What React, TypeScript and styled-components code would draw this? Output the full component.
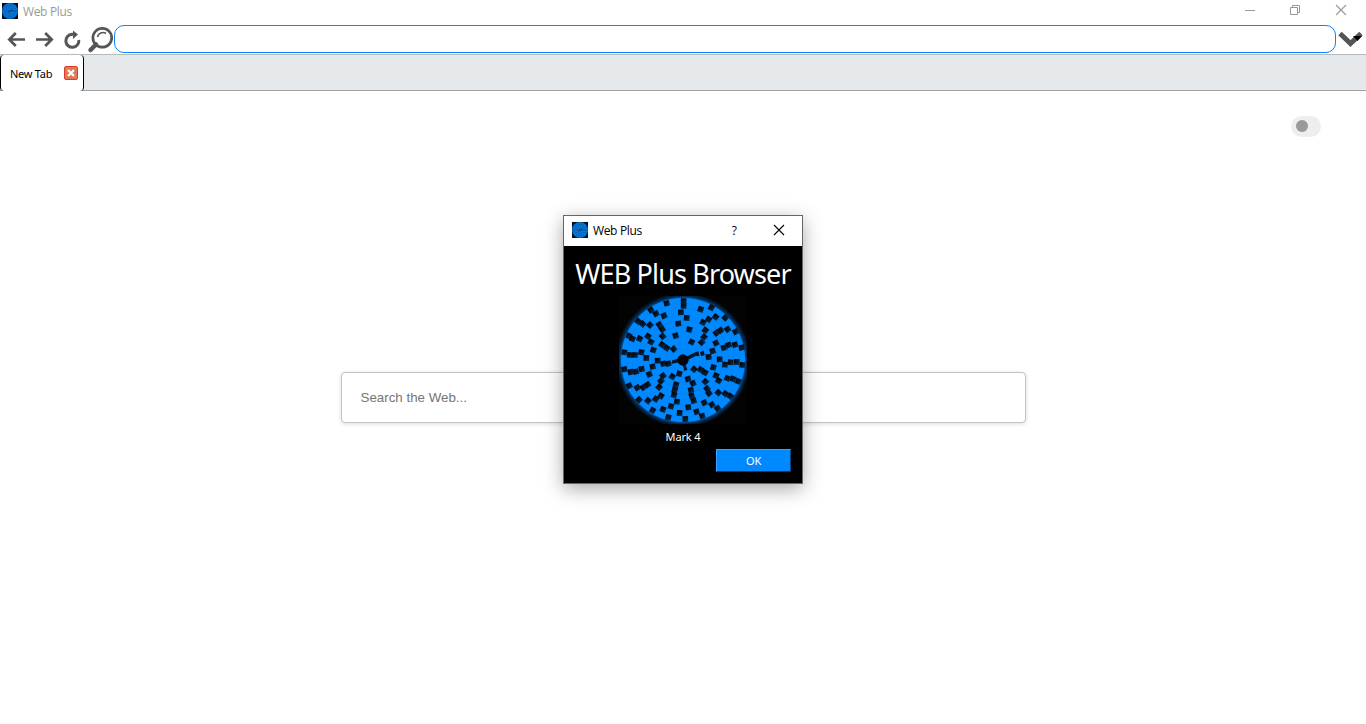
import React from "react";
import styled, { createGlobalStyle } from "styled-components";

const Global = createGlobalStyle`
  *{box-sizing:border-box}
  html,body{margin:0;height:100%;overflow:hidden;background:#fff}
  body{font:11px "Noto Sans","Open Sans",sans-serif;color:#000}
  button,input{font:inherit;margin:0}
`;

const Window = styled.div`
  position: relative;
  height: 724px;
  display: flex;
  flex-direction: column;
`;
const TitleBar = styled.header`
  height: 24px;
  display: flex;
  align-items: flex-start;
  padding: 3px 19px 0 2px;
`;
const Title = styled.span<{ $dark?: boolean }>`
  margin: 1px auto 0 5px;
  font-family: "Open Sans", sans-serif;
  font-size: 12px;
  line-height: 16px;
  letter-spacing: -0.35px;
  color: ${(p) => (p.$dark ? "#000" : "#999")};
`;
const WindowButtons = styled.div`
  display: flex;
  gap: 34px;
  height: 12px;
  margin-top: 1px;
`;
const ToolBar = styled.nav`
  height: 30px;
  display: flex;
  align-items: center;
  svg { display: block; flex: none; }
`;
const Address = styled.input`
  flex: 1;
  min-width: 0;
  height: 28px;
  border: 1px solid #0a84ff;
  border-radius: 10px;
  background: #fff;
  outline: 0;
`;
const TabStrip = styled.div`
  height: 37px;
  background: #e5e9ec;
  border-top: 1px solid #b9b9b9;
  border-bottom: 1px solid #a0a0a0;
  display: flex;
`;
const Tab = styled.div`
  width: 84px;
  height: 36px;
  background: #fff;
  border: solid #000;
  border-width: 0 1px;
  border-radius: 4px;
  display: flex;
  align-items: center;
  justify-content: space-between;
  padding: 0 5px 0 9px;
  font-size: 11px;
  letter-spacing: -0.25px;
`;
const TabClose = styled.span`
  width: 14px;
  height: 14px;
  border: 1px solid #d6402b;
  border-radius: 2px;
  background: #e07a55;
  display: flex;
`;
const Page = styled.main`
  flex: 1;
  display: flex;
  flex-direction: column;
  align-items: center;
`;
const Toggle = styled.div`
  align-self: flex-end;
  margin: 25px 45px 0 0;
  width: 30px;
  height: 21px;
  border-radius: 11px;
  background: #eee;
  padding: 4px 5px;
`;
const Knob = styled.div`
  width: 12px;
  height: 12px;
  border-radius: 50%;
  background: #999;
`;
const Search = styled.input`
  margin-top: 235px;
  margin-left: 1px;
  width: 685px;
  height: 51px;
  border: 1px solid #c3c3c3;
  border-radius: 4px;
  padding: 0 18px 0 18.5px;
  font: 13.33px "Liberation Sans", Arial, sans-serif;
  box-shadow: 0 1px 4px rgba(0, 0, 0, 0.14);
  outline: 0;
  &::placeholder { color: #757575; opacity: 1; }
`;
const Dialog = styled.section`
  position: absolute;
  left: 563px;
  top: 215px;
  width: 240px;
  height: 269px;
  border: 1px solid #666;
  background: #000;
  color: #fff;
  display: flex;
  flex-direction: column;
  box-shadow: 0 5px 18px rgba(0, 0, 0, 0.34);
`;
const DialogBar = styled.header`
  height: 30px;
  background: #fff;
  display: flex;
  align-items: center;
  padding: 0 17px 2px 8px;
`;
const Help = styled.span`
  color: #000;
  font: 500 12px/16px "Open Sans", sans-serif;
  margin: 1px 36px 0 0;
`;
const DialogBody = styled.div`
  flex: 1;
  display: flex;
  flex-direction: column;
  align-items: center;
  padding: 10px 11px 11px;
`;
const Heading = styled.h1`
  margin: 0 0 4px;
  font: 400 27px/36px "Noto Sans", sans-serif;
  letter-spacing: -0.85px;
  white-space: nowrap;
`;
const Version = styled.div`
  margin-top: 5px;
  line-height: 16px;
  letter-spacing: -0.15px;
`;
const OkButton = styled.button`
  align-self: flex-end;
  margin-top: 4px;
  width: 75px;
  height: 23px;
  padding: 0;
  background: #0088ff;
  color: #fff;
  letter-spacing: -0.3px;
  border: 1px solid;
  border-color: #3ba3ff #00448a #003a75 #3ba3ff;
`;

const tiles: [number, number][] = [
  [162,40],[213,33],[213,48],[264,58],[296,53],[205,67],[222,84],[197,101],[230,119],[189,137],[237,156],
  [115,60],[130,71],[154,77],[76,94],[90,102],[112,105],[140,104],[149,118],[150,139],[49,138],[59,146],[81,146],[106,139],[115,156],
  [148,164],[162,174],[183,177],[122,180],[35,187],[52,195],[67,195],[86,187],[101,204],[135,212],[152,221],[167,221],[120,230],
  [35,238],[54,246],[70,245],[87,237],[110,253],[151,257],[145,273],[179,260],[200,251],[50,287],[74,293],[92,292],[105,284],[139,292],[145,318],
  [190,284],[186,300],[184,315],[79,329],[106,332],[129,327],[193,335],[175,349],[151,358],[120,361],[201,369],[167,382],[218,387],
  [227,352],[243,332],[237,317],[235,300],[241,280],[226,267],[252,365],[269,378],[275,338],[298,344],[315,355],
  [289,310],[283,296],[278,275],[317,308],[338,311],[353,319],[310,257],[318,272],[344,265],[361,267],[377,274],
  [244,238],[264,239],[277,248],[302,232],[288,201],[300,183],[321,208],[337,224],[354,217],[372,216],[389,225],
  [387,173],[367,164],[348,165],[334,173],[310,159],[267,157],[274,141],[278,121],[311,129],[324,121],[345,118],[369,125],[338,83],[309,81],[288,88],[271,97],
];

function Wheel({ size }: { size: number }) {
  return (
    <svg width={size} height={size} viewBox="19 18 384 384" style={{ display: "block", flex: "none" }}>
      <defs>
        <radialGradient id="halo">
          <stop offset=".91" stopColor="#0070d4" />
          <stop offset=".94" stopColor="#00305f" />
          <stop offset="1" stopColor="#030303" />
        </radialGradient>
        <linearGradient id="tile" x1="0" y1="0" x2="1" y2="1">
          <stop stopColor="#000" />
          <stop offset=".4" stopColor="#03101c" />
          <stop offset="1" stopColor="#0b3157" />
        </linearGradient>
      </defs>
      <rect x="19" y="18" width="384" height="384" fill="#030303" />
      <circle cx="211" cy="210" r="202" fill="url(#halo)" />
      <circle cx="211" cy="210" r="186" fill="#08f" />
      <g fill="none" stroke="#0078e6" strokeWidth="1">
        {[34, 51, 68, 85, 102, 119, 136, 153, 170].map((r) => <circle key={r} cx="211" cy="210" r={r} />)}
      </g>
      {tiles.map(([x, y]) => {
        const a = (Math.atan2(y - 210, x - 211) * 180) / Math.PI;
        const turn = a - Math.round(a / 90) * 90;
        return <rect key={x + "-" + y} x={x - 8.5} y={y - 8.5} width="17" height="17" fill="url(#tile)" transform={`rotate(${turn} ${x} ${y})`} />;
      })}
      <path d="M211 205L230 196L249 186L255 195L244 200L217 214ZM249 187L257 184L260 197L252 199ZM262 186L273 182L276 195L265 199ZM210 203L179 211L176 221L194 218L215 214ZM209 220L215 243L224 239L216 216Z" fill="#031525" />
      <circle cx="211" cy="210" r="17" fill="#02060a" />
    </svg>
  );
}

function AppIcon() {
  return (
    <svg width="16" height="16" viewBox="0 0 16 16" style={{ display: "block", flex: "none" }}>
      <rect width="16" height="16" fill="#001020" />
      <circle cx="8" cy="8" r="8" fill="#0878db" />
      <g fill="none" stroke="#04427c" strokeWidth=".9">
        <circle cx="8" cy="8" r="2.2" strokeDasharray="1 1.2" />
        <circle cx="8" cy="8" r="4" strokeDasharray="1 1.3" />
        <circle cx="8" cy="8" r="5.8" strokeDasharray="1.1 1.2" />
        <circle cx="8" cy="8" r="7.5" strokeDasharray="1 1.5" />
      </g>
      <path d="M6 8.500l2-.5 2.500-1" stroke="#033560" fill="none" />
    </svg>
  );
}

const Cross = ({ color }: { color: string }) => (
  <svg width="12" height="12" viewBox="0 0 12 12"><path d="M1 1L11 11M11 1L1 11" stroke={color} strokeWidth="1.1" /></svg>
);

export default function App() {
  return (
    <Window>
      <Global />
      <TitleBar>
        <AppIcon />
        <Title>Web Plus</Title>
        <WindowButtons>
          <svg width="12" height="12"><path d="M2 6.500h10" stroke="#999" /></svg>
          <svg width="12" height="12" fill="none" stroke="#999"><path d="M1.500 3.500h7v7h-7zM3.500 3.500v-2h7v7h-2" /></svg>
          <Cross color="#999" />
        </WindowButtons>
      </TitleBar>
      <ToolBar>
        <svg width="114" height="30" viewBox="0 24 114 30" fill="none" stroke="#555" strokeWidth="2.700">
          <path d="M25 39.500H9.500M15.800 33L9.300 39.500L15.800 46" />
          <path d="M36 39.500H51.500M45.200 33L51.700 39.500L45.200 46" />
          <path d="M74 34.300H72A6.500 6.500 0 1 0 78.800 40" strokeWidth="3" />
          <path d="M73 30.500V39L78 34.500Z" fill="#555" stroke="none" />
          <circle cx="102.300" cy="37.800" r="9.400" strokeWidth="2.700" />
          <path d="M97.500 37A5.500 5.500 0 0 1 106 33.500" strokeWidth="1.600" />
          <path d="M96 44.500L90.500 50" strokeWidth="4.500" strokeLinecap="round" />
        </svg>
        <Address aria-label="Address" />
        <svg width="30" height="30" viewBox="1336 24 30 30">
          <path d="M1340 33.500L1350.500 43.500L1361 33.500" fill="none" stroke="#555" strokeWidth="5" />
          <path d="M1353 36h9l-4.500 5z" fill="#000" />
        </svg>
      </ToolBar>
      <TabStrip>
        <Tab>
          New Tab
          <TabClose><svg width="12" height="12"><path d="M3 3l6 6M9 3l-6 6" stroke="#fff" strokeWidth="2.200" /></svg></TabClose>
        </Tab>
      </TabStrip>
      <Page>
        <Toggle><Knob /></Toggle>
        <Search placeholder="Search the Web..." />
      </Page>
      <Dialog>
        <DialogBar>
          <AppIcon />
          <Title $dark>Web Plus</Title>
          <Help>?</Help>
          <Cross color="#000" />
        </DialogBar>
        <DialogBody>
          <Heading>WEB Plus Browser</Heading>
          <Wheel size={128} />
          <Version>Mark 4</Version>
          <OkButton>OK</OkButton>
        </DialogBody>
      </Dialog>
    </Window>
  );
}
